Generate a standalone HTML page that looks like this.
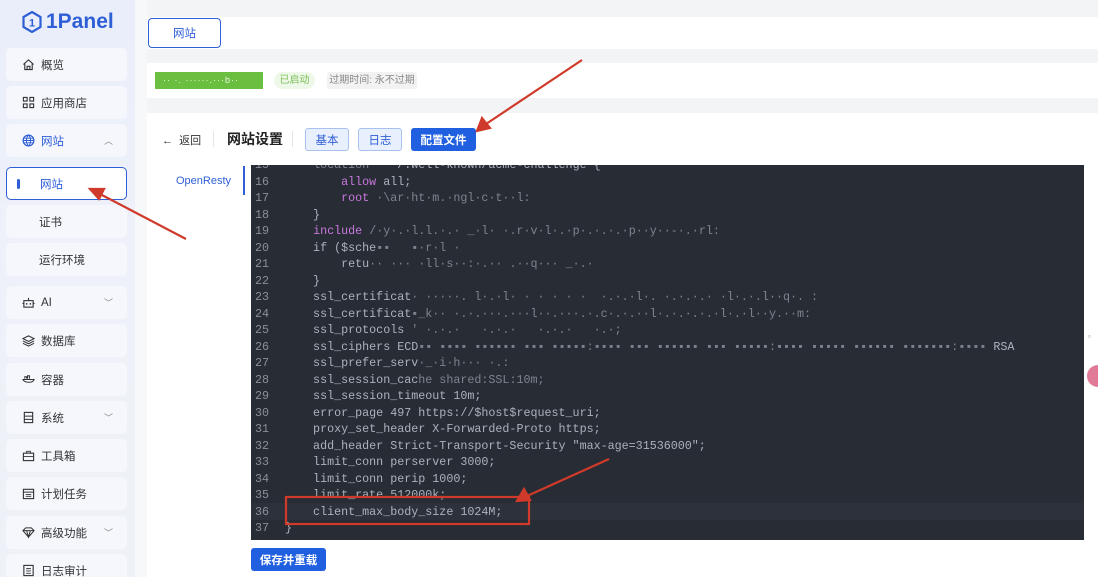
<!DOCTYPE html>
<html><head><meta charset="utf-8"><style>
*{margin:0;padding:0;box-sizing:border-box}
html,body{width:1098px;height:577px;overflow:hidden}
body{background:#f3f4f6;font-family:"Liberation Sans","Noto Sans CJK SC",sans-serif;position:relative;font-size:12px;color:#333}
.sb{position:absolute;left:0;top:0;width:135px;height:577px;background:linear-gradient(180deg,#e9eefa,#eef1f9 40%,#eef1f8)}
.logo{position:absolute;left:22px;top:10px;font-size:21px;font-weight:bold;color:#2f5fd6;display:flex;align-items:center;gap:4px}
.mi{position:absolute;left:6px;width:121px;height:33px;background:#f5f7fd;border-radius:5px;display:flex;align-items:center;padding-left:16px;font-size:11.5px;color:#333;gap:6px}
.mi .ic{width:13px;height:13px;display:inline-block}
.mi .ch{position:absolute;right:14px;top:10px;font-size:9px;color:#888}
.sub{padding-left:33px}
.act{background:#fff;border:1.5px solid #2f5fd6;color:#2f5fd6}
.card{position:absolute;background:#fff}
.ed{position:absolute;left:251px;top:165px;width:833px;height:375px;background:#282c34;overflow:hidden}
.ln{position:absolute;left:0;width:833px;height:16.5px;line-height:16.5px;font-size:11.7px;color:#abb2bf;white-space:pre;font-family:"Liberation Mono","DejaVu Sans Mono",monospace}
.ln .n{position:absolute;left:4px;color:#8a8f98}
.ln .c{position:absolute;left:34px}
.k{color:#c678dd}.g{color:#9aa0aa;opacity:.75}
.btn{position:absolute;height:23px;border-radius:3px;font-size:11.5px;display:flex;align-items:center;justify-content:center}
</style></head><body>
<div class="sb">
 <div class="logo"><svg width="20" height="22" viewBox="0 0 20 22"><path d="M10 1 L18.5 6 V16 L10 21 L1.5 16 V6 Z" fill="none" stroke="#2f5fd6" stroke-width="2.2"/><text x="10" y="15.5" font-size="11" font-weight="bold" fill="#2f5fd6" text-anchor="middle" font-family="Liberation Sans">1</text></svg>1Panel</div>
 <div class="mi" style="top:48px"><svg class="ic" viewBox="0 0 14 14"><path d="M1.5 7 L7 2 L12.5 7 M3 6 V12.5 H11 V6 M5.5 12.5 V9 H8.5 V12.5" fill="none" stroke="#333" stroke-width="1.2"/></svg>概览</div>
 <div class="mi" style="top:86px"><svg class="ic" viewBox="0 0 14 14"><path d="M1.5 1.5h4v4h-4zM8.5 1.5h4v4h-4zM1.5 8.5h4v4h-4zM8.5 8.5h4v4h-4z" fill="none" stroke="#333" stroke-width="1.2"/></svg>应用商店</div>
 <div class="mi" style="top:124px;color:#2f5fd6"><svg class="ic" viewBox="0 0 14 14"><circle cx="7" cy="7" r="5.8" fill="none" stroke="#2f5fd6" stroke-width="1.3"/><path d="M1.2 7h11.6M7 1.2c-3 3-3 8.6 0 11.6M7 1.2c3 3 3 8.6 0 11.6M2 4.5h10M2 9.5h10" fill="none" stroke="#2f5fd6" stroke-width="1"/></svg>网站<span class="ch">︿</span></div>
 <div class="mi act" style="top:167px;padding-left:10px"><span style="width:3px;height:10px;background:#2f5fd6;border-radius:2px;margin-right:14px"></span>网站</div>
 <div class="mi sub" style="top:205px">证书</div>
 <div class="mi sub" style="top:243px">运行环境</div>
 <div class="mi" style="top:286px"><svg class="ic" viewBox="0 0 14 14"><rect x="2" y="5" width="10" height="7" fill="none" stroke="#333" stroke-width="1.2"/><path d="M7 5V2M0.5 8h1.5M12 8h1.5" stroke="#333" stroke-width="1.2"/><circle cx="5" cy="8.5" r=".9" fill="#333"/><circle cx="9" cy="8.5" r=".9" fill="#333"/></svg>AI<span class="ch">﹀</span></div>
 <div class="mi" style="top:324px"><svg class="ic" viewBox="0 0 14 14"><path d="M7 2L13 5 7 8 1 5z M1 7.5L7 10.5 13 7.5 M1 10L7 13 13 10" fill="none" stroke="#333" stroke-width="1.1"/></svg>数据库</div>
 <div class="mi" style="top:363px"><svg class="ic" viewBox="0 0 14 14"><path d="M1 7h12c-1 4-10 4-12 0zM3 6V4h2v2M6 6V3h2v3" fill="none" stroke="#333" stroke-width="1.1"/></svg>容器</div>
 <div class="mi" style="top:401px"><svg class="ic" viewBox="0 0 14 14"><rect x="2.5" y="1.5" width="9" height="11" fill="none" stroke="#333" stroke-width="1.2"/><path d="M2.5 5.5h9M2.5 9h9" stroke="#333"/></svg>系统<span class="ch">﹀</span></div>
 <div class="mi" style="top:439px"><svg class="ic" viewBox="0 0 14 14"><rect x="1.5" y="4.5" width="11" height="8" fill="none" stroke="#333" stroke-width="1.2"/><path d="M5 4.5V2.5h4v2M1.5 8h11" fill="none" stroke="#333"/></svg>工具箱</div>
 <div class="mi" style="top:477px"><svg class="ic" viewBox="0 0 14 14"><rect x="1.5" y="2.5" width="11" height="10" fill="none" stroke="#333" stroke-width="1.2"/><path d="M1.5 5.5h11M4 8h6M4 10h6" stroke="#333"/></svg>计划任务</div>
 <div class="mi" style="top:516px"><svg class="ic" viewBox="0 0 14 14"><path d="M1 5L4 2h6l3 3-6 7z M1 5h12 M5 5l2 7 2-7" fill="none" stroke="#333" stroke-width="1.1"/></svg>高级功能<span class="ch">﹀</span></div>
 <div class="mi" style="top:554px"><svg class="ic" viewBox="0 0 14 14"><rect x="2" y="1.5" width="10" height="11" fill="none" stroke="#333" stroke-width="1.2"/><path d="M4.5 5h5M4.5 7.5h5M4.5 10h5" stroke="#333"/></svg>日志审计</div>
</div>
<div style="position:absolute;left:135px;top:0;width:12px;height:577px;background:#f7f8fa"></div>
<div class="card" style="left:147px;top:17px;width:951px;height:32px"></div>
<div class="btn" style="left:148px;top:18px;width:73px;height:30px;border:1.5px solid #2f5fd6;border-radius:4px;color:#2f5fd6;background:#fff">网站</div>
<div class="card" style="left:147px;top:63px;width:951px;height:35px"></div>
<div style="position:absolute;left:155px;top:72px;width:108px;height:17px;background:#6abf40;color:#eaf7e0;font-size:9px;line-height:17px;padding-left:8px;letter-spacing:1px">·· ·. ······.···b··</div>
<div style="position:absolute;left:274px;top:72px;width:41px;height:17px;background:#eef8e8;border-radius:9px;color:#7cc05a;font-size:10px;text-align:center;line-height:17px">已启动</div>
<div style="position:absolute;left:327px;top:72px;width:90px;height:17px;background:#f2f2f2;border-radius:3px;color:#888;font-size:10px;text-align:center;line-height:17px">过期时间: 永不过期</div>
<div class="card" style="left:147px;top:113px;width:951px;height:464px"></div>
<div style="position:absolute;left:162px;top:132px;font-size:11px;color:#333">←&nbsp;&nbsp;返回</div>
<div style="position:absolute;left:213px;top:131px;width:1px;height:16px;background:#e5e5e5"></div>
<div style="position:absolute;left:227px;top:129px;font-size:14px;font-weight:bold;color:#222">网站设置</div>
<div style="position:absolute;left:292px;top:131px;width:1px;height:16px;background:#e5e5e5"></div>
<div class="btn" style="left:305px;top:128px;width:44px;border:1px solid #a9c0f0;background:#e8effd;color:#2f5fd6">基本</div>
<div class="btn" style="left:358px;top:128px;width:44px;border:1px solid #a9c0f0;background:#e8effd;color:#2f5fd6">日志</div>
<div class="btn" style="left:411px;top:128px;width:65px;background:#1f5fe0;color:#fff;font-weight:bold">配置文件</div>
<div style="position:absolute;left:176px;top:175px;font-size:11px;color:#2f5fd6">OpenResty</div>
<div style="position:absolute;left:243px;top:166px;width:2px;height:29px;background:#2f5fd6"></div>
<div class="ed">
<div style="position:absolute;left:0;top:338px;width:833px;height:17px;background:#2c313c"></div>
<div style="position:absolute;top:-7.75px;left:0">
<div class="ln" style="top:0"><span class="n">15</span><span class="c">    <span class="g">location</span>  ~ /.well-known/acme-challenge {</span></div>
<div class="ln" style="top:16.5px"><span class="n">16</span><span class="c">        <span class="k">allow</span> all;</span></div>
<div class="ln" style="top:33px"><span class="n">17</span><span class="c">        <span class="k">root</span> <span class="g">·\ar·ht·m.·ngl·c·t··l:</span></span></div>
<div class="ln" style="top:49.5px"><span class="n">18</span><span class="c">    }</span></div>
<div class="ln" style="top:66px"><span class="n">19</span><span class="c">    <span class="k">include</span> <span class="g">/·y·.·l.l.·.· _·l· ·.r·v·l·.·p·.·.·.·p··y··-·.·rl:</span></span></div>
<div class="ln" style="top:82.5px"><span class="n">20</span><span class="c">    if ($sche<span class="g">▪▪   ▪·r·l ·</span></span></div>
<div class="ln" style="top:99px"><span class="n">21</span><span class="c">        retu<span class="g">·· ··· ·ll·s··:·.·· .··q··· _·.·</span></span></div>
<div class="ln" style="top:115.5px"><span class="n">22</span><span class="c">    }</span></div>
<div class="ln" style="top:132px"><span class="n">23</span><span class="c">    ssl_certificat<span class="g">· ·····. l·.·l· · · · · ·  ·.·.·l·. ·.·.·.· ·l·.·.l··q·. :</span></span></div>
<div class="ln" style="top:148.5px"><span class="n">24</span><span class="c">    ssl_certificat<span class="g">▪_k·· ·.·.···.···l··.···.·.c·.·.··l·.·.·.·.·l·.·l··y.··m:</span></span></div>
<div class="ln" style="top:165px"><span class="n">25</span><span class="c">    ssl_protocols <span class="g">' ·.·.·   ·.·.·   ·.·.·   ·.·;</span></span></div>
<div class="ln" style="top:181.5px"><span class="n">26</span><span class="c">    ssl_ciphers ECD<span class="g">▪▪ ▪▪▪▪ ▪▪▪▪▪▪ ▪▪▪ ▪▪▪▪▪:▪▪▪▪ ▪▪▪ ▪▪▪▪▪▪ ▪▪▪ ▪▪▪▪▪:▪▪▪▪ ▪▪▪▪▪ ▪▪▪▪▪▪ ▪▪▪▪▪▪▪:▪▪▪▪</span> RSA</span></div>
<div class="ln" style="top:198px"><span class="n">27</span><span class="c">    ssl_prefer_serv<span class="g">·_·i·h··· ·.:</span></span></div>
<div class="ln" style="top:214.5px"><span class="n">28</span><span class="c">    ssl_session_cac<span class="g">he shared:SSL:10m;</span></span></div>
<div class="ln" style="top:231px"><span class="n">29</span><span class="c">    ssl_session_timeout 10m;</span></div>
<div class="ln" style="top:247.5px"><span class="n">30</span><span class="c">    error_page 497 https://$host$request_uri;</span></div>
<div class="ln" style="top:264px"><span class="n">31</span><span class="c">    proxy_set_header X-Forwarded-Proto https;</span></div>
<div class="ln" style="top:280.5px"><span class="n">32</span><span class="c">    add_header Strict-Transport-Security "max-age=31536000";</span></div>
<div class="ln" style="top:297px"><span class="n">33</span><span class="c">    limit_conn perserver 3000;</span></div>
<div class="ln" style="top:313.5px"><span class="n">34</span><span class="c">    limit_conn perip 1000;</span></div>
<div class="ln" style="top:330px"><span class="n">35</span><span class="c">    limit_rate 512000k;</span></div>
<div class="ln" style="top:346.5px"><span class="n">36</span><span class="c">    client_max_body_size 1024M;</span></div>
<div class="ln" style="top:363px"><span class="n">37</span><span class="c">}</span></div>
</div></div>
<div class="btn" style="left:251px;top:548px;width:75px;height:23px;background:#1f5fe0;color:#fff;font-weight:bold">保存并重载</div>
<div style="position:absolute;left:1088px;top:332px;width:10px;height:18px;background:#fff;border-radius:4px 0 0 4px;font-size:8px;color:#888">▫</div>
<div style="position:absolute;left:1087px;top:365px;width:11px;height:22px;background:#e07a95;border-radius:11px 0 0 11px"></div>
<svg style="position:absolute;left:0;top:0" width="1098" height="577">
<g stroke="#d03a2a" stroke-width="2.2" fill="#d03a2a">
<line x1="186" y1="239" x2="100" y2="194"/><polygon points="90,189 104,189 99,199" />
<line x1="582" y1="60" x2="486" y2="124"/><polygon points="477,131 482,118 490,128"/>
<line x1="609" y1="459" x2="527" y2="496"/><polygon points="517,501 524,489 530,500"/>
<rect x="286" y="497" width="243" height="27" fill="none"/>
</g></svg>
</body></html>
